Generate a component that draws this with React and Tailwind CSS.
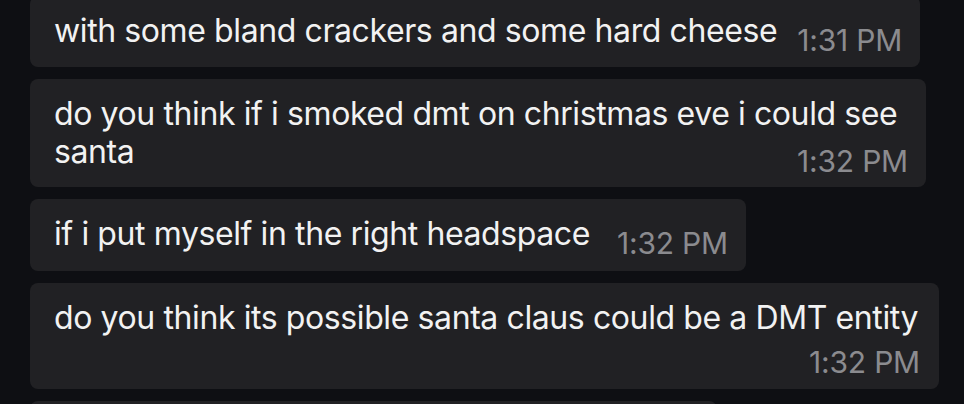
import React from "react";

const font = { fontFamily: "Inter, 'Noto Sans', sans-serif" };

function Ts({ children, className = "" }) {
  return (
    <span className={"text-[30px] leading-[38px] tracking-[-0.2px] text-[#8b8b8f] whitespace-nowrap " + className}>
      {children}
    </span>
  );
}

const msg = "text-[32px] leading-[38px] tracking-[-0.4px] text-[#f2f2f2] whitespace-nowrap";

export default function App() {
  return (
    <div
      className="w-[964px] h-[404px] overflow-hidden bg-[#0e0f13] antialiased"
      style={font}
    >
      <div className="flex flex-col gap-3 pl-[30px] mt-[-4px]">
        {/* bubble 1 */}
        <div className="w-fit flex items-start rounded-[8px] bg-[#212124] pl-6 pr-[18px] pt-4 pb-[8px]">
          <span className={msg}>with some bland crackers and some hard cheese</span>
          <Ts className="ml-[20px] mt-[9px]">1:31 PM</Ts>
        </div>

        {/* bubble 2 */}
        <div className="w-[896px] rounded-[8px] bg-[#212124] pl-6 pr-[18px] pt-4 pb-[7px]">
          <div className={msg}>
            do you think if i smoked dmt on christmas eve i could see
            <br />
            santa
          </div>
          <div className="flex justify-end mt-[-29px]">
            <Ts>1:32 PM</Ts>
          </div>
        </div>

        {/* bubble 3 */}
        <div className="w-fit flex items-start rounded-[8px] bg-[#212124] pl-6 pr-[18px] pt-4 pb-[9px]">
          <span className={msg}>if i put myself in the right headspace</span>
          <Ts className="ml-[27px] mt-[9px]">1:32 PM</Ts>
        </div>

        {/* bubble 4 */}
        <div className="w-[909px] rounded-[8px] bg-[#212124] pl-6 pr-[19px] pt-4 pb-[8px]">
          <div className={msg}>do you think its possible santa claus could be a DMT entity</div>
          <div className="flex justify-end mt-[6px]">
            <Ts>1:32 PM</Ts>
          </div>
        </div>

        {/* bubble 5 (cut off) */}
        <div className="w-[687px] h-[60px] rounded-[8px] bg-[#212124]" />
      </div>
    </div>
  );
}
